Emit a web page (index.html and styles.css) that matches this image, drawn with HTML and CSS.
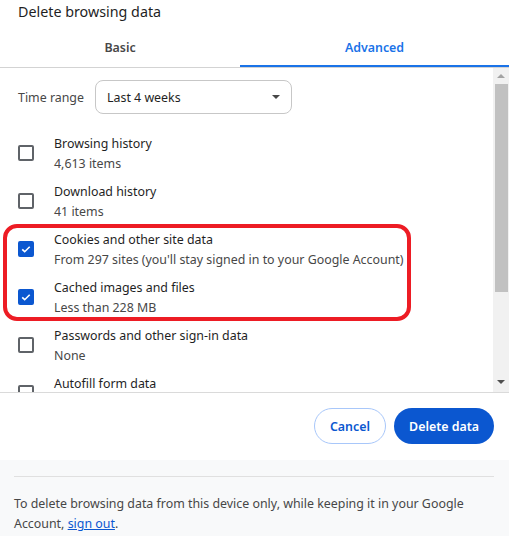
FILE: index.html
```html
<!DOCTYPE html>
<html lang="en">
<head>
  <meta charset="UTF-8">
  <title>Delete browsing data</title>
  <link rel="stylesheet" href="styles.css">
</head>
<body>
  <div class="dialog">
    <h1 class="title">Delete browsing data</h1>

    <div class="tabs">
      <div class="tab basic">Basic</div>
      <div class="tab active">Advanced</div>
    </div>

    <div class="body">
      <div class="list">
        <div class="range">
          <span class="range-label">Time range</span>
          <div class="select">
            <span>Last 4 weeks</span>
            <span class="caret"></span>
          </div>
        </div>

        <div class="row">
          <span class="box"></span>
          <div class="text">
            <div class="label">Browsing history</div>
            <div class="sub">4,613 items</div>
          </div>
        </div>
        <div class="row">
          <span class="box"></span>
          <div class="text">
            <div class="label">Download history</div>
            <div class="sub">41 items</div>
          </div>
        </div>

        <div class="marked">
          <div class="row">
            <span class="box checked">
              <svg viewBox="0 0 16 16" width="16" height="16"><path d="M4.2 8.3l2.5 2.4 5-5" fill="none" stroke="#fff" stroke-width="1.6"/></svg>
            </span>
            <div class="text">
              <div class="label">Cookies and other site data</div>
              <div class="sub">From 297 sites (you'll stay signed in to your Google Account)</div>
            </div>
          </div>
          <div class="row">
            <span class="box checked">
              <svg viewBox="0 0 16 16" width="16" height="16"><path d="M4.2 8.3l2.5 2.4 5-5" fill="none" stroke="#fff" stroke-width="1.6"/></svg>
            </span>
            <div class="text">
              <div class="label">Cached images and files</div>
              <div class="sub">Less than 228 MB</div>
            </div>
          </div>
          <div class="ring"></div>
        </div>

        <div class="row">
          <span class="box"></span>
          <div class="text">
            <div class="label">Passwords and other sign-in data</div>
            <div class="sub">None</div>
          </div>
        </div>
        <div class="row">
          <span class="box"></span>
          <div class="text">
            <div class="label">Autofill form data</div>
            <div class="sub">&nbsp;</div>
          </div>
        </div>
      </div>

      <div class="scrollbar">
        <span class="arrow up"></span>
        <div class="thumb"></div>
        <span class="arrow down"></span>
      </div>
    </div>

    <div class="actions">
      <button class="btn cancel">Cancel</button>
      <button class="btn primary">Delete data</button>
    </div>

    <div class="footer">
      <p><span>To delete browsing data from this device only, while keeping it in your Google</span><br><span>Account,</span> <a href="#">sign out</a>.</p>
    </div>
  </div>
</body>
</html>
```

FILE: styles.css
```css
body {
  margin: 0;
  font-family: "Noto Sans", "Open Sans", sans-serif;
  font-size: 12.4px;
  color: #1f1f1f;
  background: #fff;
}
.dialog {
  width: 509px;
  height: 536px;
  overflow: hidden;
}
.title {
  margin: 0;
  padding-left: 18px;
  height: 24px;
  line-height: 24px;
  font-size: 14.3px;
  font-weight: normal;
}

/* Tabs */
.tabs {
  display: flex;
  border-bottom: 1px solid #d3d3d3;
}
.tab {
  flex: 1;
  text-align: center;
  padding-top: 6px;
  height: 35px;
  line-height: 36px;
  font-weight: 600;
  color: #474747;
  border-bottom: 2px solid transparent;
}
.tab.basic {
  flex: 0 0 240px;
}
.tab.active {
  color: #1a73e8;
  border-bottom-color: #1a73e8;
}

/* Scrolling list */
.body {
  display: flex;
  height: 324px;
  border-bottom: 1px solid #dadada;
}
.list {
  flex: 1;
  overflow: hidden;
  padding-top: 12px;
}
.range {
  display: flex;
  align-items: center;
  padding-left: 18px;
  margin-bottom: 15px;
}
.range-label {
  width: 77px;
  color: #474747;
}
.select {
  width: 173px;
  height: 32px;
  border: 1px solid #c7c7c7;
  border-radius: 8px;
  display: flex;
  align-items: center;
  justify-content: space-between;
  padding: 0 11px 0 11px;
}
.caret {
  border-left: 4px solid transparent;
  border-right: 4px solid transparent;
  border-top: 4px solid #474747;
}
.row {
  display: flex;
  align-items: center;
  height: 48px;
  padding-left: 18px;
}
.text {
  padding-top: 2px;
}
.box {
  width: 12px;
  height: 12px;
  border: 2px solid #5f6368;
  border-radius: 2px;
  margin-right: 20px;
  flex-shrink: 0;
  position: relative;
}
.box.checked {
  background: #0b57d0;
  border-color: #0b57d0;
}
.box svg {
  position: absolute;
  left: -2px;
  top: -2px;
}
.label {
  line-height: 20px;
}
.sub {
  line-height: 20px;
  color: #474747;
}
.marked {
  position: relative;
}
.ring {
  position: absolute;
  left: 3px;
  top: -1px;
  width: 400px;
  height: 89px;
  border: 4px solid #ed1c24;
  border-radius: 14px;
}

/* Fake scrollbar */
.scrollbar {
  width: 16px;
  background: #f1f1f1;
  display: flex;
  flex-direction: column;
  align-items: center;
}
.thumb {
  width: 13px;
  height: 208px;
  background: #c1c1c1;
  margin: 6px 0 auto 1px;
}
.arrow {
  width: 0;
  height: 0;
  border-left: 4px solid transparent;
  border-right: 4px solid transparent;
  margin: 6px 0;
}
.arrow.up {
  border-bottom: 4px solid #a3a3a3;
  margin-bottom: 0;
}
.arrow.down {
  border-top: 4px solid #505050;
  margin-bottom: 8px;
}

/* Buttons */
.actions {
  display: flex;
  justify-content: flex-end;
  gap: 8px;
  padding: 15px 15px 16px;
}
.btn {
  height: 36px;
  border-radius: 18px;
  font-family: inherit;
  font-size: 12.4px;
  font-weight: 600;
  cursor: pointer;
}
.cancel {
  width: 72px;
  background: #fff;
  color: #0b57d0;
  border: 1px solid #a8c7fa;
}
.primary {
  width: 100px;
  background: #0b57d0;
  color: #fff;
  border: none;
}

/* Footer */
.footer {
  background: #f8f9fa;
  padding: 16px 15px 0 14px;
  height: 77px;
  box-sizing: border-box;
}
.footer p {
  margin: 0;
  border-top: 1px solid #e0e0e0;
  padding-top: 17px;
  line-height: 20px;
  color: #474747;
}
.footer a {
  color: #0b57d0;
}
```
